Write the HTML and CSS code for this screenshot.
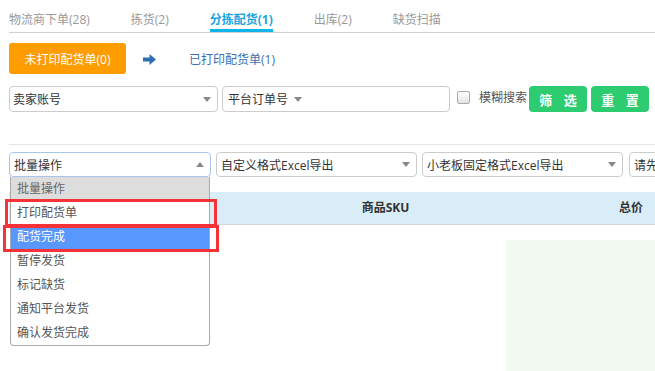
FILE: index.html
```html
<!DOCTYPE html>
<html lang="zh-CN">
<head>
  <meta charset="UTF-8" />
  <meta name="viewport" content="width=device-width, initial-scale=1.0"/>
  <title>分拣配货</title>
  <link rel="stylesheet" href="styles.css">
</head>
<body>
  <div class="tabs">
    <div class="tab">物流商下单(28)</div>
    <div class="tab">拣货(2)</div>
    <div class="tab active">分拣配货(1)</div>
    <div class="tab">出库(2)</div>
    <div class="tab">缺货扫描</div>
  </div>

  <div class="print-row">
    <button class="btn-orange">未打印配货单(0)</button>
    <svg class="arrow" width="13" height="11" viewBox="0 0 13 11">
      <path d="M0 3.5h6.5V0L13 5.5 6.5 11V7.5H0z" fill="#2f6fb0"/>
    </svg>
    <a class="link-printed">已打印配货单(1)</a>
  </div>

  <div class="filter-row">
    <div class="select seller">
      <span>卖家账号</span>
      <i class="caret"></i>
    </div>
    <div class="select order">
      <span>平台订单号</span>
      <i class="caret"></i>
    </div>
    <label class="fuzzy"><span class="checkbox"></span>模糊搜索</label>
    <button class="btn-green">筛 选</button>
    <button class="btn-green">重 置</button>
  </div>

  <div class="divider"></div>

  <div class="ops-row">
    <div class="ops-selects">
      <div class="select ops focus">
        <span>批量操作</span>
        <i class="caret up"></i>
      </div>
      <div class="select export">
        <span>自定义格式Excel导出</span>
        <i class="caret"></i>
      </div>
      <div class="select export">
        <span>小老板固定格式Excel导出</span>
        <i class="caret"></i>
      </div>
      <div class="select export last">
        <span>请先选择</span>
        <i class="caret"></i>
      </div>
    </div>

    <ul class="dropdown">
      <li class="disabled">批量操作</li>
      <li>打印配货单</li>
      <li class="selected">配货完成</li>
      <li>暂停发货</li>
      <li>标记缺货</li>
      <li>通知平台发货</li>
      <li>确认发货完成</li>
    </ul>
    <div class="mark mark-1"></div>
    <div class="mark mark-2"></div>
  </div>

  <div class="table-head">
    <div></div>
    <div>商品SKU</div>
    <div class="col-price">总价</div>
  </div>

  <div class="empty-area"></div>
</body>
</html>
```

FILE: styles.css
```css
body {
  margin: 0;
  font-family: "Open Sans", "Noto Sans CJK SC", sans-serif;
  font-size: 12px;
  color: #333;
  background: #fff;
  overflow: hidden;
  width: 655px;
  height: 371px;
}

.tabs {
  display: flex;
  gap: 41px;
  margin-left: 9px;
  height: 33px;
  box-sizing: border-box;
  border-bottom: 1px solid #cfcfd4;
}

.tab {
  padding-top: 10px;
  line-height: 19px;
  color: #999;
  box-sizing: border-box;
  height: 32px;
  white-space: nowrap;
}

.tab.active {
  color: #1aa3e0;
  font-weight: bold;
  border-bottom: 3px solid #0fb4ea;
}

.print-row {
  display: flex;
  align-items: center;
  margin: 10px 0 0 9px;
  height: 31px;
}

.btn-orange {
  width: 117px;
  height: 31px;
  border: none;
  border-radius: 3px;
  background: #ff9c00;
  color: #fff;
  font-family: inherit;
  font-size: 12px;
  padding: 0;
}

.arrow {
  margin-left: 17px;
  margin-top: 2px;
}

.link-printed {
  margin-left: 33px;
  color: #3a6fb5;
}

.filter-row {
  display: flex;
  align-items: center;
  margin: 12px 0 0 9px;
  height: 26px;
}

.select {
  display: flex;
  align-items: center;
  flex: none;
  height: 26px;
  box-sizing: border-box;
  border: 1px solid #ccc;
  border-radius: 4px;
  padding: 0 6px 0 3px;
  background: #fff;
  color: #333;
  white-space: nowrap;
  overflow: hidden;
}

.select span {
  flex: 1;
}

.caret {
  width: 0;
  height: 0;
  border-left: 4px solid transparent;
  border-right: 4px solid transparent;
  border-top: 5px solid #888;
}

.caret.up {
  border-top: none;
  border-bottom: 5px solid #888;
}

.seller {
  width: 209px;
  padding-right: 6px;
}

.order {
  width: 228px;
  margin-left: 4px;
  padding-left: 5px;
}

.order span {
  flex: none;
  margin-right: 6px;
}

.fuzzy {
  display: flex;
  align-items: center;
  margin-left: 7px;
  color: #555;
  white-space: nowrap;
  margin-top: -4px;
}

.checkbox {
  width: 11px;
  height: 11px;
  border: 1px solid #aaa;
  border-radius: 2px;
  background: linear-gradient(#fdfdfd, #e4e4e4);
  margin-right: 9px;
}

.btn-green {
  height: 26px;
  border: none;
  border-radius: 4px;
  background: #2ecc71;
  color: #fff;
  font-family: inherit;
  font-size: 13px;
  font-weight: bold;
  letter-spacing: 4px;
  text-indent: 4px;
  padding: 0;
  width: 58px;
  margin-left: 4px;
}

.fuzzy + .btn-green {
  margin-left: 2px;
}

.divider {
  margin: 32px 0 0 9px;
  border-top: 1px solid #e6e6e6;
}

.ops-row {
  position: relative;
  margin: 7px 0 0 9px;
}

.ops-selects {
  display: flex;
  gap: 5px;
  overflow: hidden;
}

.ops-selects .select {
  height: 25px;
  padding-left: 4px;
}

.ops {
  width: 202px;
  border-color: #a8c4e8;
}

.export {
  width: 201px;
}

.export.last {
  margin-left: 1px;
}

.dropdown {
  position: absolute;
  top: 25px;
  left: 1px;
  width: 200px;
  margin: 0;
  padding: 0;
  list-style: none;
  box-sizing: border-box;
  border: 1px solid #aaa;
  border-top: none;
  border-radius: 0 0 4px 4px;
  background: #fff;
  z-index: 2;
}

.dropdown li {
  height: 24px;
  line-height: 24px;
  padding-left: 6px;
  color: #555;
}

.dropdown li.disabled {
  background: #ddd;
  color: #666;
}

.dropdown li.selected {
  background: #5897fb;
  color: #fff;
}

.mark {
  position: absolute;
  border: 3px solid #f53238;
  box-sizing: border-box;
  z-index: 3;
}

.mark-1 {
  left: -4px;
  top: 47px;
  width: 212px;
  height: 28px;
}

.mark-2 {
  left: -6px;
  top: 73px;
  width: 216px;
  height: 27px;
}

.table-head {
  display: grid;
  grid-template-columns: 250px 253px 1fr;
  margin: 15px 0 0 9px;
  height: 33px;
  box-sizing: border-box;
  background: #d9edf8;
  border-bottom: 1px solid #d0d6da;
  font-weight: bold;
  line-height: 32px;
  text-align: center;
  color: #333;
}

.table-head .col-price {
  text-align: right;
  padding-right: 12px;
}

.empty-area {
  margin: 15px 0 0 506px;
  height: 140px;
  background: #f3faf1;
}
```
